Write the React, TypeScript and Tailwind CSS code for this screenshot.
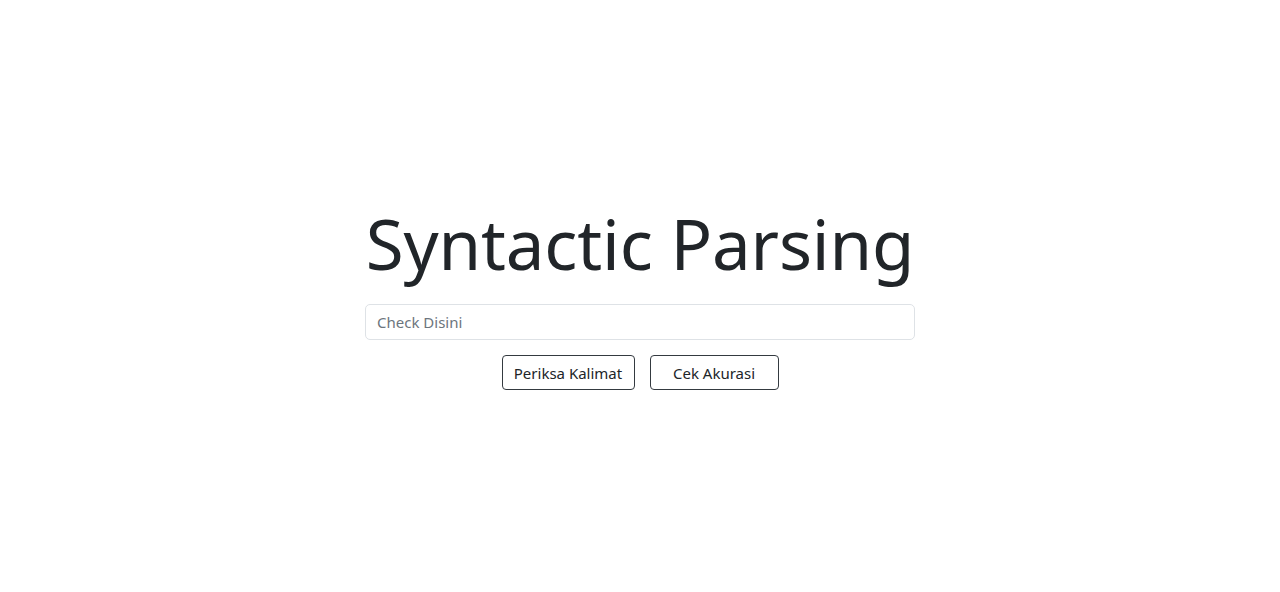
export default function App() {
  return (
    <div
      className="min-h-[592px] flex items-center justify-center bg-white text-[#212529]"
      style={{ fontFamily: '"Noto Sans", "Liberation Sans", sans-serif' }}
    >
      <div className="w-[550px] flex flex-col items-center">
        <h1 className="text-[69px] leading-[1.2] tracking-[-0.15px] whitespace-nowrap mb-[20px]">Syntactic Parsing</h1>
        <input
          type="text"
          placeholder="Check Disini"
          className="w-full h-[36px] px-[11px] text-[15px] border border-[#dee2e6] rounded-[5px] outline-none placeholder:text-[#6c757d]"
        />
        <div className="flex gap-[15px] mt-[15px]">
          <button className="h-[35px] w-[133px] border border-[#343a40] rounded-[4px] text-[15px] text-[#212529]">
            Periksa Kalimat
          </button>
          <button className="h-[35px] w-[129px] border border-[#343a40] rounded-[4px] text-[15px] text-[#212529]">
            Cek Akurasi
          </button>
        </div>
      </div>
    </div>
  );
}
